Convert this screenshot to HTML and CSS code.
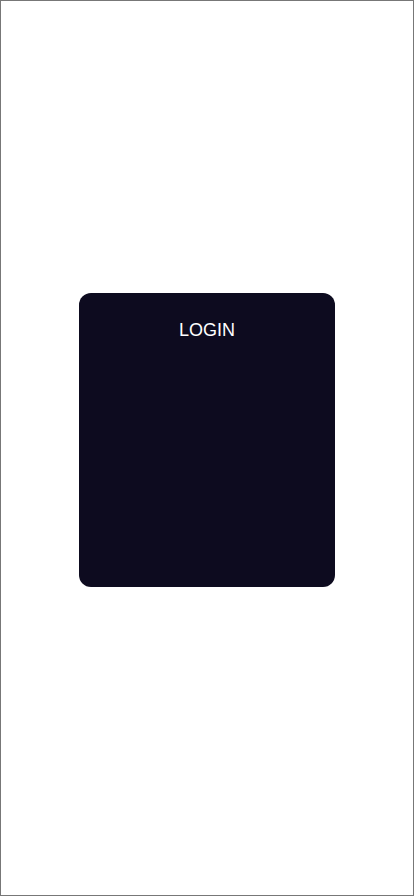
FILE: index.html
```html
<!DOCTYPE html>
<html lang="en">
<head>
	<meta charset="UTF-8">
	<meta name="viewport" content="width=device-width, initial-scale=1.0">
	<title>Login</title>
	<link rel="stylesheet" href="styles.css">
</head>
<body>
	<div class="page">
		<div class="login-card">
			<h2 class="login-title">LOGIN</h2>
		</div>
	</div>
</body>
</html>
```

FILE: styles.css
```css
html, body {
	margin: 0;
	padding: 0;
}
body {
	font-family: "Liberation Sans", Arial, sans-serif;
	background-color: #fff;
}
.page {
	box-sizing: border-box;
	height: 896px;
	border: 1px solid #777;
	padding-top: 292px;
	display: flex;
	flex-direction: column;
	align-items: center;
}
.login-card {
	width: 256px;
	height: 294px;
	background-color: #0d0b1f;
	border-radius: 12px;
	padding-top: 27px;
	box-sizing: border-box;
}
.login-title {
	margin: 0;
	color: #fff;
	font-size: 18px;
	font-weight: normal;
	text-align: center;
}
```
